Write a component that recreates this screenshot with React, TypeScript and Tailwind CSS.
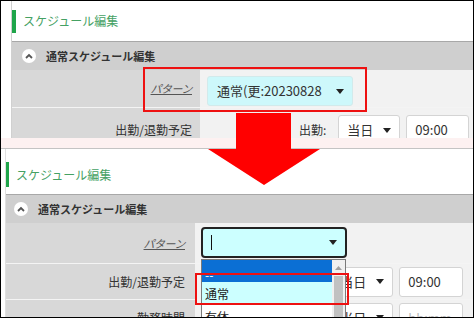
import React from "react";

const FONT = "font-['Noto_Sans_CJK_JP','Noto_Sans',sans-serif]";

function Caret() {
  return (
    <svg width="8" height="5" viewBox="0 0 8 5">
      <path d="M0 0h8L4 5z" fill="#222" />
    </svg>
  );
}

function Collapse() {
  return (
    <div className="w-[14px] h-[14px] rounded-full bg-white flex items-center justify-center">
      <svg width="8" height="6" viewBox="0 0 8 6">
        <polyline points="1,5 4,2 7,5" fill="none" stroke="#555" strokeWidth="1.8" />
      </svg>
    </div>
  );
}

function Title({ bar }: { bar: string }) {
  return (
    <div className="flex items-center h-full">
      <div className={`${bar} bg-[#1fa54a]`} />
      <span className="text-[12px] text-[#45a163] ml-[7px]">スケジュール編集</span>
    </div>
  );
}

function Box({ w, children, className = "" }: { w: string; children: React.ReactNode; className?: string }) {
  return (
    <div
      className={`${w} h-[30px] rounded-[3px] border border-[#d4d4d4] bg-white flex items-center justify-between pl-[8px] pr-[8px] text-[13px] text-[#333] ${className}`}
    >
      {children}
    </div>
  );
}

export default function App() {
  return (
    <div className={`${FONT} w-[474px] h-[318px] border border-black relative overflow-hidden bg-white flex flex-col`}>
      {/* before */}
      <div className="ml-[10px] border-l border-[#d0d0d0] h-[137px] shrink-0 overflow-hidden flex flex-col">
        <div className="h-[40px] shrink-0">
          <Title bar="w-[4px] h-[23px]" />
        </div>
        <div className="h-px bg-[#a8a8a8] shrink-0" />
        <div className="h-[28px] shrink-0 bg-[#cfcfcf] flex items-center pl-[10px] gap-[10px]">
          <Collapse />
          <span className="text-[11px] font-bold text-[#333]">通常スケジュール編集</span>
        </div>
        <div className="grid grid-cols-[188px_1fr] h-[37px] shrink-0">
          <div className="bg-[#d8d8d8] flex items-center justify-end pr-[8px]">
            <span className="text-[11px] text-[#555] underline italic tracking-[-0.5px]">パターン</span>
          </div>
          <div className="bg-[#f2f2f2] flex items-start pt-[6px] pl-[7px]">
            <div className="w-[146px] h-[30px] rounded-[3px] border border-[#d2eaeb] bg-[#cdf8fb] flex items-center justify-between pl-[9px] pr-[8px] text-[13px] text-[#333]">
              <span>通常(更:20230828</span>
              <Caret />
            </div>
          </div>
        </div>
        <div className="h-px bg-[#f4f4f4] shrink-0" />
        <div className="grid grid-cols-[188px_1fr] h-[44px] shrink-0">
          <div className="bg-[#d8d8d8] flex items-center justify-end pr-[8px]">
            <span className="text-[12px] text-[#333]">出勤/退勤予定</span>
          </div>
          <div className="bg-[#f2f2f2] flex items-start pt-[7px] pl-[99px]">
            <span className="h-[30px] flex items-center text-[12px] text-[#333]">出勤:</span>
            <Box w="w-[62px]" className="ml-[12px]">
              <span>当日</span>
              <Caret />
            </Box>
            <Box w="w-[63px]" className="ml-[6px]">
              <span>09:00</span>
            </Box>
          </div>
        </div>
      </div>

      <div className="h-[10px] shrink-0 bg-[#fdf1f1]" />
      <div className="h-px shrink-0 bg-[#c4c4c4]" />

      {/* after */}
      <div className="ml-[4px] border-l border-[#e0e0e0] flex-1 overflow-hidden flex flex-col">
        <div className="h-[45px] shrink-0 pt-[6px]">
          <Title bar="w-[3px] h-[25px]" />
        </div>
        <div className="h-px bg-[#a8a8a8] shrink-0" />
        <div className="h-[28px] shrink-0 bg-[#cfcfcf] flex items-center pl-[8px] gap-[10px]">
          <Collapse />
          <span className="text-[11px] font-bold text-[#333]">通常スケジュール編集</span>
        </div>
        <div className="grid grid-cols-[189px_1fr] h-[40px] shrink-0">
          <div className="bg-[#d8d8d8] flex items-center justify-end pr-[10px]">
            <span className="text-[11px] text-[#555] underline italic tracking-[-0.5px]">パターン</span>
          </div>
          <div className="bg-[#f2f2f2] flex items-start pt-[4px] pl-[6px]">
            <div className="w-[146px] h-[31px] rounded-[4px] border-2 border-[#222] bg-[#ccffff] flex items-center justify-between pl-[8px] pr-[8px]">
              <div className="w-px h-[15px] bg-[#111]" />
              <Caret />
            </div>
          </div>
        </div>
        <div className="h-px bg-[#f4f4f4] shrink-0" />
        <div className="grid grid-cols-[189px_1fr] h-[35px] shrink-0">
          <div className="bg-[#d8d8d8] flex items-center justify-end pr-[10px]">
            <span className="text-[12px] text-[#333]">出勤/退勤予定</span>
          </div>
          <div className="bg-[#f2f2f2] flex items-center pl-[97px]">
            <span className="text-[12px] text-[#333]">出勤:</span>
            <Box w="w-[62px]" className="ml-[12px]">
              <span>当日</span>
              <Caret />
            </Box>
            <Box w="w-[64px]" className="ml-[6px]">
              <span>09:00</span>
            </Box>
          </div>
        </div>
        <div className="h-px bg-[#f4f4f4] shrink-0" />
        <div className="grid grid-cols-[189px_1fr] h-[35px] shrink-0">
          <div className="bg-[#d8d8d8] flex items-center justify-end pr-[10px]">
            <span className="text-[12px] text-[#333]">勤務時間</span>
          </div>
          <div className="bg-[#f2f2f2] flex items-center pl-[97px]">
            <span className="text-[12px] text-[#333]">退勤:</span>
            <Box w="w-[62px]" className="ml-[12px]">
              <span>当日</span>
              <Caret />
            </Box>
            <Box w="w-[64px]" className="ml-[6px]">
              <span className="text-[#bbb]">hh:mm</span>
            </Box>
          </div>
        </div>
      </div>

      {/* open select list */}
      <div className="absolute left-[200px] top-[258px] w-[145px] h-[70px] border border-[#7a7a7a] bg-white flex text-[12px] text-[#222]">
        <div className="flex-1 flex flex-col">
          <div className="h-[22px] bg-[#0b6fd4] text-white pl-[3px] flex items-end leading-[14px]">--</div>
          <div className="h-[23px] bg-[#ccffff] pl-[3px] flex items-center">通常</div>
          <div className="h-[23px] bg-white pl-[3px] flex items-center">有休</div>
        </div>
        <div className="w-[13px] bg-[#f0f0f0] flex flex-col items-center">
          <div className="h-[16px] flex items-center">
            <svg width="7" height="4" viewBox="0 0 7 4">
              <path d="M0 4h7L3.5 0z" fill="#a0a0a0" />
            </svg>
          </div>
          <div className="flex-1 w-[9px] bg-[#c1c1c1]" />
        </div>
      </div>

      {/* highlights */}
      <div className="absolute left-[142px] top-[66px] w-[224px] h-[45px] border-2 border-[#ee1111]" />
      <div className="absolute left-[194px] top-[272px] w-[154px] h-[32px] border-2 border-[#ee1111]" />
      <svg className="absolute left-[206px] top-[111px]" width="115" height="75" viewBox="0 0 115 75">
        <polygon points="29,1 84,1 84,37 113,37 57,73 1,37 29,37" fill="#ff0000" />
      </svg>
    </div>
  );
}
